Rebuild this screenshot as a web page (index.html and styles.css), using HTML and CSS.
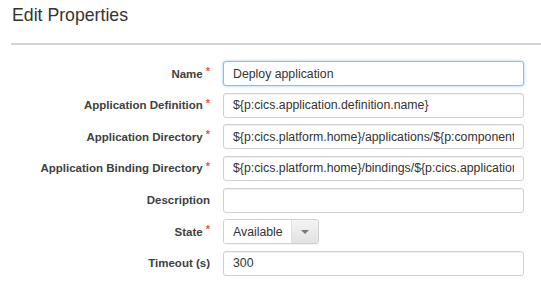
FILE: index.html
```html
<!DOCTYPE html>
<html lang="en">
<head>
    <meta charset="UTF-8">
    <title>Edit Properties</title>
    <link rel="stylesheet" href="styles.css">
</head>
<body>

<div class="panel">
    <h2 class="panel-title">Edit Properties</h2>
    <div class="divider"></div>

    <!-- Properties form -->
    <form class="props-form">
        <label class="prop-label" for="name">Name<span class="req">*</span></label>
        <input class="prop-input focused" type="text" id="name" value="Deploy application">

        <label class="prop-label" for="appdef">Application Definition<span class="req">*</span></label>
        <input class="prop-input" type="text" id="appdef" value="${p:cics.application.definition.name}">

        <label class="prop-label" for="appdir">Application Directory<span class="req">*</span></label>
        <input class="prop-input" type="text" id="appdir" value="${p:cics.platform.home}/applications/${p:component.name}">

        <label class="prop-label" for="bindir">Application Binding Directory<span class="req">*</span></label>
        <input class="prop-input" type="text" id="bindir" value="${p:cics.platform.home}/bindings/${p:cics.application.binding.name}">

        <label class="prop-label" for="desc">Description</label>
        <input class="prop-input" type="text" id="desc" value="">

        <label class="prop-label" for="state">State<span class="req">*</span></label>
        <div class="select-box" id="state">
            <span class="select-value">Available</span>
            <span class="select-btn"><span class="caret"></span></span>
        </div>

        <label class="prop-label" for="timeout">Timeout (s)</label>
        <input class="prop-input" type="text" id="timeout" value="300">
    </form>
</div>

</body>
</html>
```

FILE: styles.css
```css
body {
    font-family: "Liberation Sans", Arial, sans-serif;
    background-color: #fff;
    color: #333;
    margin: 0;
    padding: 0;
}
.panel {
    padding-top: 5px;
}
.panel-title {
    font-size: 17.7px;
    font-weight: normal;
    line-height: 20px;
    margin: 0 0 0 12px;
    color: #333;
}
.divider {
    margin: 18px 0 0 11px;
    height: 2px;
    background-color: #d4d4d4;
}
.props-form {
    display: grid;
    grid-template-columns: 210px 301px;
    grid-auto-rows: 25px;
    column-gap: 13px;
    row-gap: 6.67px;
    margin-top: 16px;
}
.prop-label {
    display: flex;
    align-items: center;
    justify-content: flex-end;
    font-size: 11.5px;
    font-weight: bold;
    color: #404040;
}
.req {
    color: #e0584f;
    font-size: 11px;
    margin-left: 3px;
    align-self: flex-start;
    margin-top: 4px;
}
.prop-input {
    box-sizing: border-box;
    height: 25px;
    width: 301px;
    margin: 0;
    padding: 0 9px;
    font-family: "Liberation Sans", Arial, sans-serif;
    font-size: 12.3px;
    color: #333;
    border: 1px solid #d0d0d0;
    border-radius: 3px;
    box-shadow: inset 0 1px 1px rgba(0,0,0,0.06);
    outline: none;
}
.prop-input.focused {
    border-color: #7cc4f0;
    box-shadow: 0 0 3px rgba(102,175,233,0.7);
}
.select-box {
    box-sizing: border-box;
    display: flex;
    width: 96px;
    height: 25px;
    border: 1px solid #d0d0d0;
    border-radius: 3px;
    font-size: 12.3px;
    overflow: hidden;
    box-shadow: 0 1px 1px rgba(0,0,0,0.05);
}
.select-value {
    flex: 1;
    display: flex;
    align-items: center;
    padding-left: 9px;
    background-color: #fff;
}
.select-btn {
    width: 26px;
    display: flex;
    align-items: center;
    justify-content: center;
    background: linear-gradient(#f4f4f4, #e2e2e2);
    border-left: 1px solid #e0e0e0;
}
.caret {
    width: 0;
    height: 0;
    border-left: 4px solid transparent;
    border-right: 4px solid transparent;
    border-top: 4px solid #777;
}
```
